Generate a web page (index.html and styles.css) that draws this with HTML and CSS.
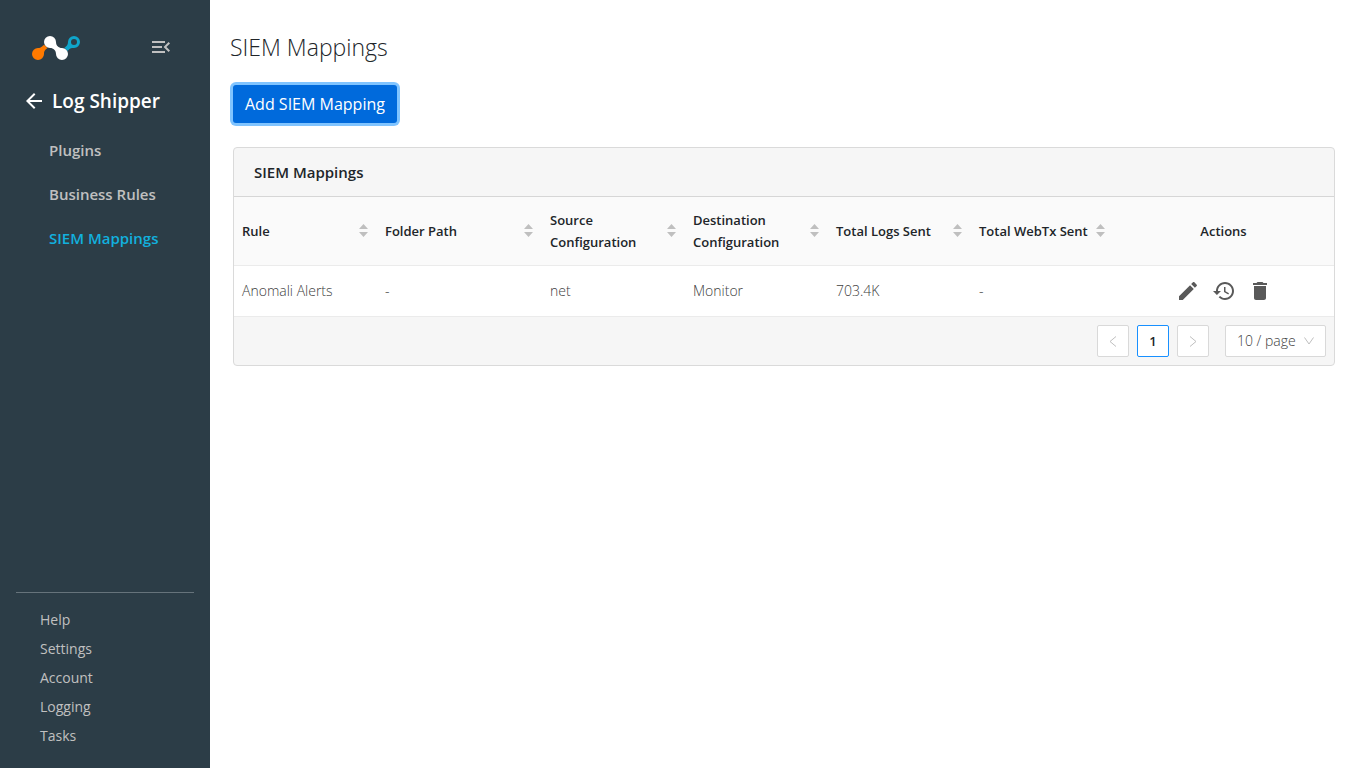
FILE: index.html
```html
<!DOCTYPE html>
<html lang="en">
<head>
<meta charset="utf-8">
<title>SIEM Mappings</title>
<link rel="stylesheet" href="styles.css">
</head>
<body>
<div class="app">
  <aside class="sidebar">
    <div class="brand">
      <svg class="logo" width="48" height="25" viewBox="0 -1 48 25" aria-label="Logo" role="img">
        <path fill="#ff7a00" d="M6 12C9.500 12 10 10 13 8.200L16 11.200C13.500 14 12 14 12 18A6 6 0 1 1 6 12Z"/>
        <path fill="#0fa5cb" d="M42 0a6 6 0 0 0-6 6c0 3-1.500 4-4 6.200l3.200 3.200C37.500 12.500 39 12 42 12a6 6 0 0 0 0-12Zm0 3a3 3 0 1 1 0 6 3 3 0 0 1 0-6Z"/>
        <path fill="#fff" stroke="#2c3d47" stroke-width="1" paint-order="stroke" d="M18 0a6 6 0 0 1 6 6c0 3.500 2.500 6 6 6a6 6 0 1 1-6 6c0-3.500-2.500-6-6-6a6 6 0 0 1 0-12Z"/>
      </svg>
      <button class="icon-button collapse" type="button" aria-label="Collapse menu">
        <svg width="24" height="24" viewBox="0 0 24 24"><path d="M3 18h13v-2H3v2zm0-5h10v-2H3v2zm0-7v2h13V6H3zm18 9.590L17.420 12 21 8.410 19.590 7l-5 5 5 5L21 15.590z"/></svg>
      </button>
    </div>
    <a class="section" href="#">
      <svg width="24" height="24" viewBox="0 0 24 24"><path d="M20 11H7.830l5.590-5.590L12 4l-8 8 8 8 1.410-1.410L7.830 13H20v-2z"/></svg>
      <span>Log Shipper</span>
    </a>
    <nav class="menu">
      <a href="#">Plugins</a>
      <a href="#">Business Rules</a>
      <a class="active" href="#" aria-current="page">SIEM Mappings</a>
    </nav>
    <nav class="footer-menu">
      <a href="#">Help</a>
      <a href="#">Settings</a>
      <a href="#">Account</a>
      <a href="#">Logging</a>
      <a href="#">Tasks</a>
    </nav>
  </aside>

  <main class="content">
    <h1>SIEM Mappings</h1>
    <button class="primary" type="button">Add SIEM Mapping</button>
    <section class="card">
      <h2>SIEM Mappings</h2>
      <table>
        <colgroup><col class="std"><col class="wide"><col class="std"><col class="std"><col class="std"><col class="std"><col class="actions-col"></colgroup>
        <thead>
          <tr>
            <th><button class="sort" type="button">Rule <svg width="9" height="14" viewBox="0 0 9 14"><path d="M0 5L4.500 0 9 5ZM0 8h9L4.500 13Z"/></svg></button></th>
            <th><button class="sort" type="button">Folder Path <svg width="9" height="14" viewBox="0 0 9 14"><path d="M0 5L4.500 0 9 5ZM0 8h9L4.500 13Z"/></svg></button></th>
            <th><button class="sort" type="button">Source Configuration <svg width="9" height="14" viewBox="0 0 9 14"><path d="M0 5L4.500 0 9 5ZM0 8h9L4.500 13Z"/></svg></button></th>
            <th><button class="sort" type="button">Destination Configuration <svg width="9" height="14" viewBox="0 0 9 14"><path d="M0 5L4.500 0 9 5ZM0 8h9L4.500 13Z"/></svg></button></th>
            <th><button class="sort" type="button">Total Logs Sent <svg width="9" height="14" viewBox="0 0 9 14"><path d="M0 5L4.500 0 9 5ZM0 8h9L4.500 13Z"/></svg></button></th>
            <th><button class="sort" type="button">Total WebTx Sent <svg width="9" height="14" viewBox="0 0 9 14"><path d="M0 5L4.500 0 9 5ZM0 8h9L4.500 13Z"/></svg></button></th>
            <th class="center">Actions</th>
          </tr>
        </thead>
        <tbody>
          <tr>
            <td>Anomali Alerts</td>
            <td>-</td>
            <td>net</td>
            <td>Monitor</td>
            <td>703.4K</td>
            <td>-</td>
            <td>
              <div class="actions">
                <button class="icon-button" type="button" aria-label="Edit"><svg width="24" height="24" viewBox="0 0 24 24"><path d="M3 17.250V21h3.750L17.810 9.940l-3.750-3.750L3 17.250zM20.710 7.040c.39-.39.39-1.020 0-1.410l-2.340-2.340c-.39-.39-1.020-.39-1.410 0l-1.830 1.830 3.750 3.750 1.830-1.830z"/></svg></button>
                <button class="icon-button" type="button" aria-label="History"><svg width="24" height="24" viewBox="0 0 24 24"><path d="M13 3c-4.970 0-9 4.030-9 9H1l3.890 3.890.07.14L9 12H6c0-3.870 3.130-7 7-7s7 3.130 7 7-3.130 7-7 7c-1.930 0-3.680-.79-4.940-2.060l-1.420 1.420C8.270 19.990 10.510 21 13 21c4.970 0 9-4.030 9-9s-4.030-9-9-9zm-1 5v5l4.280 2.540.72-1.210-3.500-2.080V8H12z"/></svg></button>
                <button class="icon-button" type="button" aria-label="Delete"><svg width="24" height="24" viewBox="0 0 24 24"><path d="M6 19c0 1.100.9 2 2 2h8c1.100 0 2-.9 2-2V7H6v12zM19 4h-3.500l-1-1h-5l-1 1H5v2h14V4z"/></svg></button>
              </div>
            </td>
          </tr>
        </tbody>
      </table>
      <div class="pagination">
        <button class="page" type="button" aria-label="Previous page"><svg width="10" height="12" viewBox="0 0 10 12"><path d="M8 1.500L2 6.500 8 11.500"/></svg></button>
        <button class="page current" type="button" aria-current="page">1</button>
        <button class="page" type="button" aria-label="Next page"><svg width="10" height="12" viewBox="0 0 10 12"><path d="M2 1.500L8 6.500 2 11.500"/></svg></button>
        <div class="page-size">
          <select aria-label="Rows per page"><option>10 / page</option><option>20 / page</option></select>
          <svg width="12" height="10" viewBox="0 0 12 10"><path d="M1.500 1.500L6 8l4.500-6.500"/></svg>
        </div>
      </div>
    </section>
  </main>
</div>
</body>
</html>
```

FILE: styles.css
```css
* { box-sizing: border-box; }

body {
  margin: 0;
  background: #fff;
  color: #212529;
  font-family: "Segoe UI", "Open Sans", "Noto Sans", sans-serif;
  font-size: 14px;
  line-height: 22px;
}

a { color: inherit; text-decoration: none; }

button, select { font: inherit; color: inherit; }

svg { display: block; fill: currentColor; flex: none; }

.app { display: flex; min-height: 100vh; }

.sidebar {
  display: flex;
  flex-direction: column;
  flex: none;
  width: 210px;
  padding: 35px 16px 17px;
  background: #2c3d47;
  color: #c0c0c0;
}

.brand {
  display: flex;
  align-items: flex-start;
  justify-content: space-between;
  padding: 0 21px 0 16px;
}

.icon-button {
  padding: 0;
  border: 0;
  background: none;
  cursor: pointer;
}

.section {
  display: flex;
  align-items: center;
  gap: 6px;
  margin-top: 29px;
  padding-left: 6px;
  color: #fff;
  font-size: 19px;
  font-weight: 600;
  line-height: 24px;
}

.menu {
  display: flex;
  flex-direction: column;
  gap: 20px;
  margin-top: 25px;
  padding-left: 33px;
  font-size: 15px;
  font-weight: 600;
  line-height: 24px;
}

.menu .active { color: #12b0de; }

.footer-menu {
  display: flex;
  flex-direction: column;
  gap: 7px;
  margin-top: auto;
  padding: 16px 24px 4px;
  border-top: 1px solid #66737b;
}

.content {
  flex: 1;
  min-width: 0;
  padding: 31px 31px 32px 20px;
}

h1 {
  margin: 0;
  font-size: 23px;
  font-weight: 300;
  line-height: 32px;
}

.primary {
  display: block;
  margin: 22px 3px 24px;
  padding: 0 12px;
  height: 38px;
  border: 0;
  border-radius: 3px;
  background: #006adc;
  box-shadow: 0 0 0 3px #80c4ff;
  color: #fff;
  font-size: 16px;
}

.card {
  margin-left: 3px;
  border: 1px solid #dadada;
  border-radius: 4px;
  background: #f6f6f6;
}

h2 {
  margin: 0;
  padding: 12px 20px;
  border-bottom: 1px solid #d6d6d6;
  font-size: 15px;
  font-weight: 600;
  line-height: 24px;
}

table {
  width: 100%;
  border-spacing: 0;
  table-layout: fixed;
}

.std { width: 13%; }
.wide { width: 15%; }
.actions-col { width: 20%; }

th, td {
  padding: 12px 8px;
  border-bottom: 1px solid #ebebeb;
  text-align: left;
}

th {
  padding-right: 9px;
  background: #fafafa;
  font-size: 13px;
  font-weight: 600;
}

td {
  padding: 13px 8px;
  background: #fff;
  color: #404040;
  font-weight: 300;
}

.center { text-align: center; }

.sort {
  display: flex;
  align-items: center;
  justify-content: space-between;
  gap: 6px;
  width: 100%;
  padding: 0;
  border: 0;
  background: none;
  text-align: left;
}

.sort svg { color: #bfbfbf; }

.actions {
  display: flex;
  justify-content: center;
  gap: 12px;
  color: #595959;
}

.pagination {
  display: flex;
  justify-content: flex-end;
  gap: 8px;
  padding: 8px;
}

.page {
  display: grid;
  place-items: center;
  width: 32px;
  height: 32px;
  padding: 0;
  border: 1px solid #d9d9d9;
  border-radius: 2px;
  background: #fff;
}

.page.current { border-color: #1890ff; font-size: 13px; font-weight: 600; }

.page svg, .page-size svg {
  fill: none;
  stroke: #bfbfbf;
  stroke-width: 1;
}

.page-size {
  display: grid;
  align-items: center;
  margin-left: 8px;
}

.page-size > * { grid-area: 1 / 1; }

.page-size svg {
  justify-self: end;
  margin-right: 11px;
  pointer-events: none;
}

select {
  appearance: none;
  width: 101px;
  height: 32px;
  padding: 0 0 0 11px;
  border: 1px solid #d9d9d9;
  border-radius: 2px;
  background: #fff;
  color: #404040;
  font-weight: 300;
}
```
